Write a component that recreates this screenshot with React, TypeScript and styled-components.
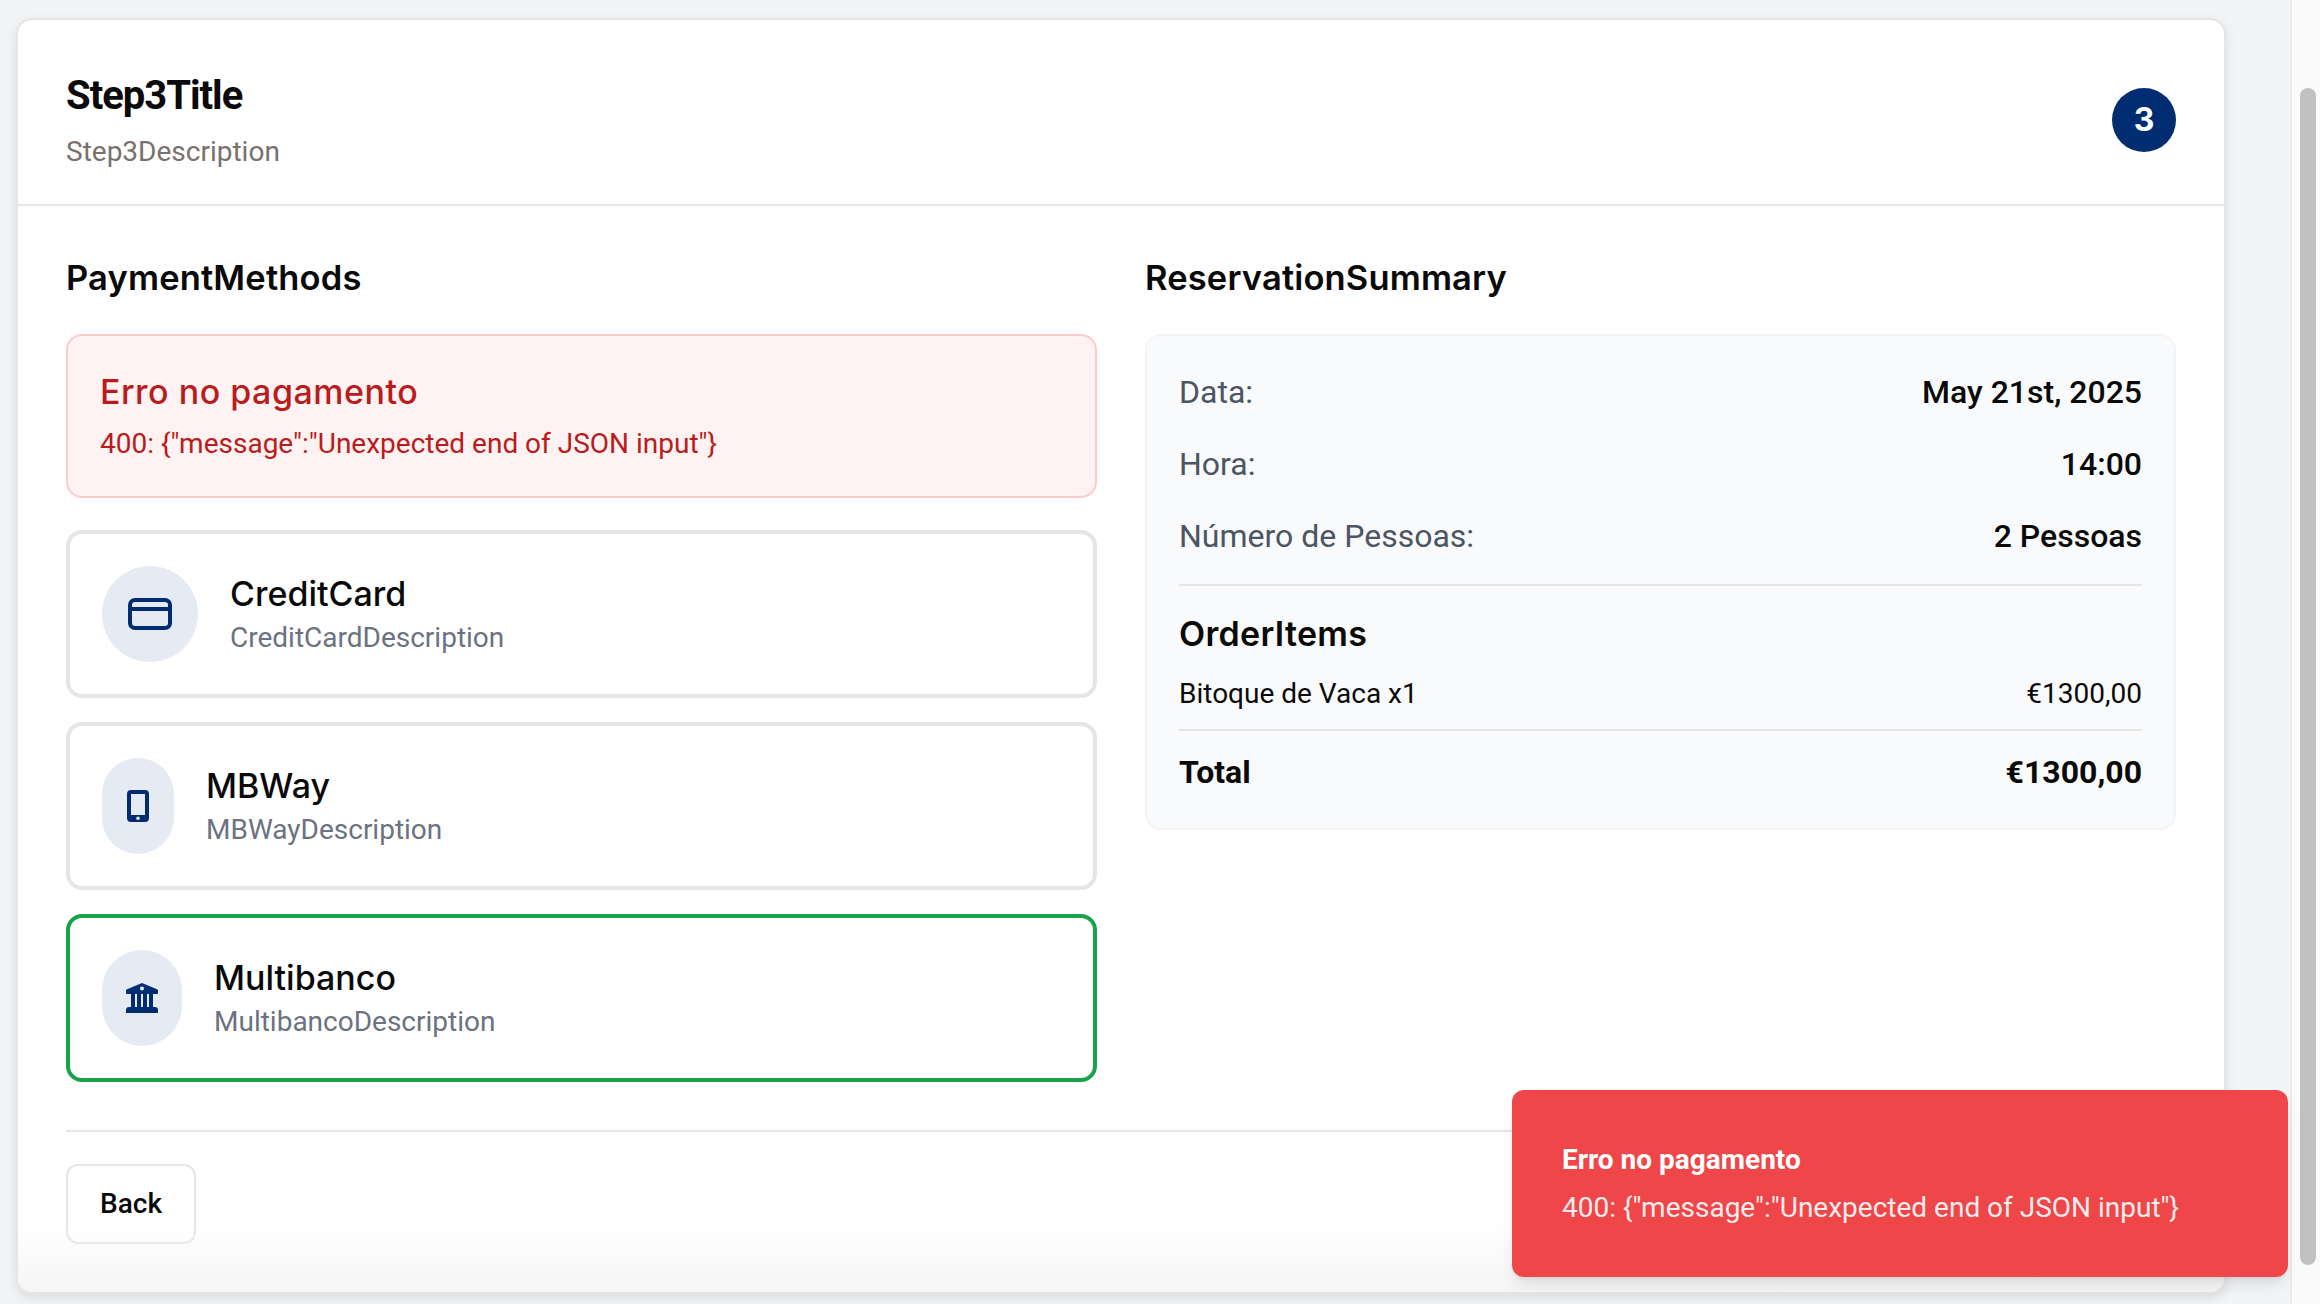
import React from 'react';
import styled, { createGlobalStyle } from 'styled-components';

const Global = createGlobalStyle`
  html, body { margin: 0; padding: 0; height: 100%; overflow: hidden; background: #f3f4f6; }
  body { font-family: Roboto, "Liberation Sans", sans-serif; color: #0a0a0a; }
  #root { height: 100%; }
  * { box-sizing: border-box; }
`;

const Viewport = styled.div`
  display: flex;
  height: 1304px;
  width: 2320px;
  overflow: hidden;
  position: relative;
`;
const Page = styled.main`
  flex: 1;
  min-width: 0;
  padding: 18px 64px 0 16px;
  background: #f3f4f6;
`;
const Scrollbar = styled.aside`
  width: 30px;
  padding: 88px 6px 0 8px;
  background: #fafafa;
  border-left: 2px solid #ebebeb;
`;
const Thumb = styled.div`
  height: 1177px;
  width: 16px;
  border-radius: 8px;
  background: #c1c1c1;
`;
const Card = styled.section`
  position: relative;
  height: 1276px;
  width: 2210px;
  background: #fff;
  border: 2px solid #e5e5e5;
  border-radius: 16px;
  box-shadow: 0 4px 12px rgba(0, 0, 0, 0.1);
  overflow: hidden;
`;
const BottomFade = styled.div`
  position: absolute;
  left: 0;
  right: 0;
  bottom: 0;
  height: 70px;
  pointer-events: none;
  background: linear-gradient(to bottom, rgba(245, 245, 245, 0), #f5f5f5);
`;
const Header = styled.header`
  display: flex;
  justify-content: space-between;
  align-items: center;
  height: 186px;
  padding: 16px 48px 0;
  border-bottom: 2px solid #e5e5e5;
`;
const Title = styled.h2`
  margin: 3px 0 12px;
  font-size: 40px;
  line-height: 48px;
  font-weight: 700;
  letter-spacing: -1px;
`;
const Description = styled.p`
  margin: 0;
  font-size: 28px;
  line-height: 40px;
  color: #78716c;
`;
const StepBadge = styled.div`
  display: flex;
  align-items: center;
  justify-content: center;
  width: 64px;
  height: 64px;
  border-radius: 50%;
  background: #002d72;
  color: #fff;
  font: 700 32px/1 Inter, Roboto, sans-serif;
`;
const Body = styled.div`
  display: grid;
  grid-template-columns: 1031px 1031px;
  gap: 48px;
  padding: 48px 48px 0;
  height: 924px;
`;
const Column = styled.div`
  display: flex;
  flex-direction: column;
`;
const SectionTitle = styled.h3`
  margin: 0 0 32px;
  font: 600 34.5px/48px Inter, "Noto Sans", sans-serif;
  letter-spacing: 0.15px;
  height: 48px;
`;
const ErrorBox = styled.div`
  height: 164px;
  padding: 32px 32px 0;
  margin-bottom: 32px;
  border: 2px solid #fecaca;
  border-radius: 16px;
  background: #fef2f2;
  color: #b91c1c;
`;
const ErrorTitle = styled.h4`
  margin: 0 0 8px;
  font: 500 34px/48px Inter, "Noto Sans", sans-serif;
  letter-spacing: 0.5px;
`;
const ErrorText = styled.p`
  margin: 0;
  font-size: 28px;
  line-height: 40px;
`;
const Methods = styled.div`
  display: flex;
  flex-direction: column;
  gap: 24px;
`;
const Method = styled.div<{ $selected?: boolean }>`
  display: flex;
  align-items: center;
  gap: 32px;
  height: 168px;
  padding: 0 32px;
  border: 4px solid ${p => (p.$selected ? '#16a34a' : '#e5e5e5')};
  border-radius: 16px;
  background: #fff;
`;
const IconWrap = styled.div<{ $w: number }>`
  display: flex;
  align-items: center;
  justify-content: center;
  width: ${p => p.$w}px;
  height: 96px;
  flex: none;
  border-radius: 48px;
  background: #e6eaf3;
  color: #002d72;
`;
const MethodName = styled.div`
  font: 500 34px/48px Inter, "Noto Sans", sans-serif;
`;
const MethodDesc = styled.div`
  font-size: 28px;
  line-height: 40px;
  color: #6b7280;
`;
const Summary = styled.div`
  height: 496px;
  padding: 32px;
  border: 2px solid #f3f4f6;
  border-radius: 16px;
  background: #f9fafb;
`;
const Row = styled.div`
  display: flex;
  justify-content: space-between;
  align-items: center;
  height: 48px;
  margin-bottom: 24px;
  font-size: 32px;
`;
const RowLabel = styled.span`
  color: #4b5563;
`;
const RowValue = styled.span`
  font-weight: 500;
`;
const Divider = styled.hr`
  height: 2px;
  margin: 0;
  border: 0;
  background: #e7e5e4;
`;
const OrderTitle = styled.h4`
  margin: 24px 0 8px;
  font: 600 34px/48px Inter, "Noto Sans", sans-serif;
  letter-spacing: 0.3px;
`;
const OrderRow = styled.div`
  display: flex;
  justify-content: space-between;
  align-items: center;
  height: 40px;
  margin: 15px 0 16px;
  font-size: 28px;
`;
const TotalRow = styled.div`
  display: flex;
  justify-content: space-between;
  align-items: center;
  height: 48px;
  margin-top: 17px;
  font-size: 32px;
  font-weight: 700;
`;
const Footer = styled.footer`
  margin: 0 48px;
  padding-top: 32px;
  border-top: 2px solid #e5e5e5;
`;
const BackButton = styled.button`
  width: 130px;
  height: 80px;
  border: 2px solid #e5e5e5;
  border-radius: 12px;
  background: #fff;
  color: #0a0a0a;
  font: 500 28px/40px Roboto, sans-serif;
`;
const Toast = styled.div`
  position: absolute;
  left: 1512px;
  top: 1090px;
  width: 776px;
  height: 187px;
  padding: 50px 48px 0 50px;
  border-radius: 12px;
  background: #ee4649;
  color: #fff;
  box-shadow: 0 10px 15px -3px rgba(0, 0, 0, 0.1), 0 4px 6px -4px rgba(0, 0, 0, 0.1);
`;
const ToastTitle = styled.div`
  font-size: 28px;
  line-height: 40px;
  font-weight: 700;
`;
const ToastText = styled.div`
  margin-top: 8px;
  font-size: 28px;
  line-height: 40px;
  opacity: 0.9;
`;

const CardIcon = () => (
  <svg width="44" height="32" viewBox="0 0 44 32" fill="none" stroke="currentColor" strokeWidth="4">
    <rect x="2" y="2" width="40" height="28" rx="5" />
    <path d="M2 11h40" />
  </svg>
);
const PhoneIcon = () => (
  <svg width="22" height="32" viewBox="0 0 22 32" fill="currentColor">
    <path fillRule="evenodd" d="M4 0h14a4 4 0 0 1 4 4v24a4 4 0 0 1-4 4H4a4 4 0 0 1-4-4V4a4 4 0 0 1 4-4Zm0 4v21h14V4H4Z" />
    <circle cx="11" cy="28.2" r="1.8" fill="#e6eaf3" />
  </svg>
);
const BankIcon = () => (
  <svg width="32" height="30" viewBox="0 0 32 30" fill="currentColor">
    <path fillRule="evenodd" d="M16 0 31 6.200c.6.3 1 .8 1 1.400V10a1 1 0 0 1-1 1H1a1 1 0 0 1-1-1V7.600c0-.6.4-1.100 1-1.400L16 0Zm0 3.600a2 2 0 1 0 0 4 2 2 0 0 0 0-4Z" />
    <path d="M5 11h4v14H5zM11 11h4v14h-4zM17 11h4v14h-4zM23 11h4v14h-4z" />
    <path d="M3 24h26A3 3 0 0 1 32 27v3H0v-3A3 3 0 0 1 3 24Z" />
  </svg>
);

const methods = [
  { name: 'CreditCard', desc: 'CreditCardDescription', w: 96, icon: <CardIcon /> },
  { name: 'MBWay', desc: 'MBWayDescription', w: 72, icon: <PhoneIcon /> },
  { name: 'Multibanco', desc: 'MultibancoDescription', w: 80, icon: <BankIcon />, selected: true },
];

const rows = [
  ['Data:', 'May 21st, 2025'],
  ['Hora:', '14:00'],
  ['Número de Pessoas:', '2 Pessoas'],
];

const message = '400: {"message":"Unexpected end of JSON input"}';

export default function App() {
  return (
    <Viewport>
      <Global />
      <Page>
        <Card>
          <Header>
            <div>
              <Title>Step3Title</Title>
              <Description>Step3Description</Description>
            </div>
            <StepBadge>3</StepBadge>
          </Header>
          <Body>
            <Column>
              <SectionTitle>PaymentMethods</SectionTitle>
              <ErrorBox>
                <ErrorTitle>Erro no pagamento</ErrorTitle>
                <ErrorText>{message}</ErrorText>
              </ErrorBox>
              <Methods>
                {methods.map(m => (
                  <Method key={m.name} $selected={m.selected}>
                    <IconWrap $w={m.w}>{m.icon}</IconWrap>
                    <div>
                      <MethodName>{m.name}</MethodName>
                      <MethodDesc>{m.desc}</MethodDesc>
                    </div>
                  </Method>
                ))}
              </Methods>
            </Column>
            <Column>
              <SectionTitle>ReservationSummary</SectionTitle>
              <Summary>
                {rows.map(([l, v]) => (
                  <Row key={l}>
                    <RowLabel>{l}</RowLabel>
                    <RowValue>{v}</RowValue>
                  </Row>
                ))}
                <Divider />
                <OrderTitle>OrderItems</OrderTitle>
                <OrderRow>
                  <span>Bitoque de Vaca x1</span>
                  <span>€1300,00</span>
                </OrderRow>
                <Divider />
                <TotalRow>
                  <span>Total</span>
                  <span>€1300,00</span>
                </TotalRow>
              </Summary>
            </Column>
          </Body>
          <Footer>
            <BackButton>Back</BackButton>
          </Footer>
          <BottomFade />
        </Card>
      </Page>
      <Scrollbar>
        <Thumb />
      </Scrollbar>
      <Toast>
        <ToastTitle>Erro no pagamento</ToastTitle>
        <ToastText>{message}</ToastText>
      </Toast>
    </Viewport>
  );
}
